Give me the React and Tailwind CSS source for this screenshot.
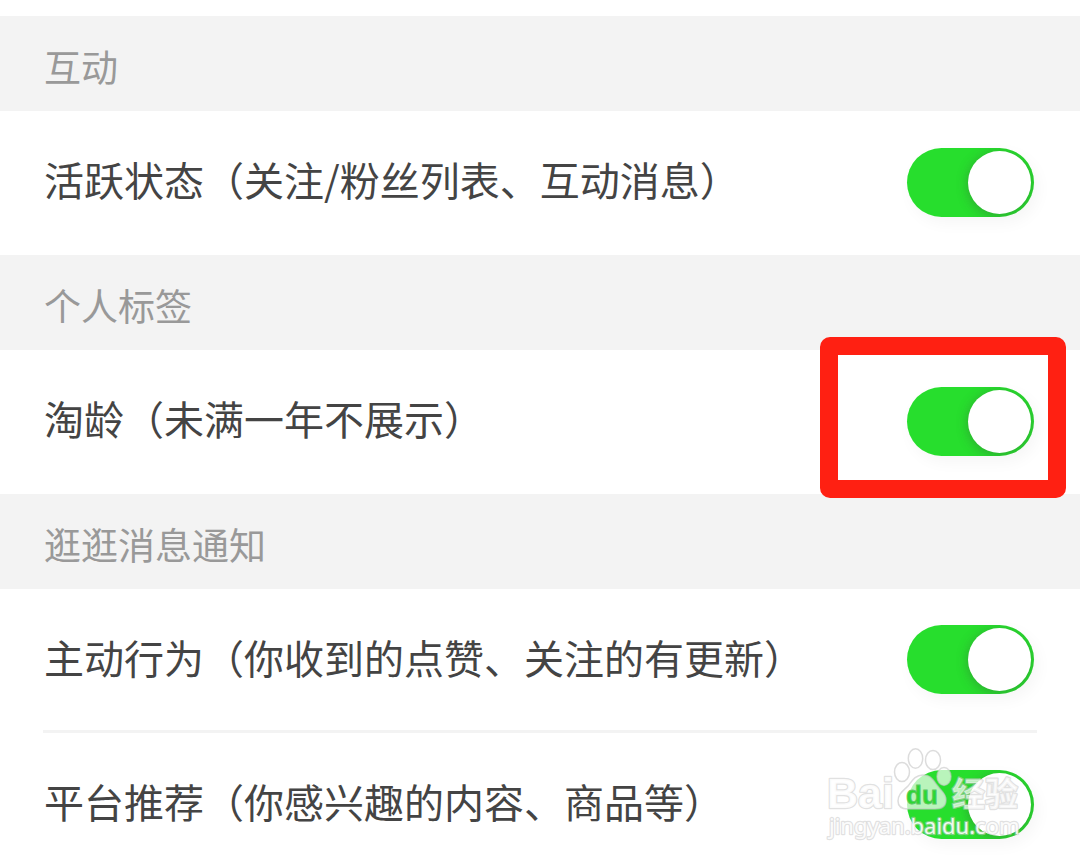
import React from 'react';

const SECTIONS = [
  {
    title: '互动',
    items: [{ id: 'active-status', label: '活跃状态（关注/粉丝列表、互动消息）' }],
  },
  {
    title: '个人标签',
    items: [{ id: 'tao-age', label: '淘龄（未满一年不展示）', highlighted: true }],
  },
  {
    title: '逛逛消息通知',
    items: [
      { id: 'behavior', label: '主动行为（你收到的点赞、关注的有更新）' },
      { id: 'recommend', label: '平台推荐（你感兴趣的内容、商品等）' },
    ],
  },
];

const Toggle = ({ id }) => (
  <input
    id={id}
    type="checkbox"
    role="switch"
    defaultChecked
    className="flex h-[69px] w-[127px] shrink-0 cursor-pointer appearance-none items-center overflow-hidden rounded-full bg-gray-300 p-[3px] shadow-[4px_6px_16px_rgba(0,0,0,0.04)] before:h-[63px] before:w-[63px] before:rounded-full before:bg-white before:shadow-[0_2px_12px_rgba(60,60,60,0.35)] checked:justify-end checked:bg-[#27de2d]"
  />
);

const SettingRow = ({ item, divided }) => (
  <div className="relative px-[43px]">
    <div
      className={
        divided
          ? 'flex h-[144px] items-center justify-between border-b-3 border-[#f3f3f3] pr-[3px] pl-px'
          : 'flex h-[144px] items-center justify-between pr-[3px] pb-[2px] pl-px'
      }
    >
      <label
        htmlFor={item.id}
        className="pb-1.5 text-[40px] leading-[60px] whitespace-nowrap text-[#444444]"
      >
        {item.label}
      </label>
      <Toggle id={item.id} />
    </div>
    {/* Red frame drawn over the row to point at its switch */}
    {item.highlighted && (
      <div className="pointer-events-none absolute -top-[13px] right-[14px] -bottom-1 z-10 w-[246px] rounded-[10px] border-18 border-[#ff2012]" />
    )}
  </div>
);

// Paw logo with the site name, semi-transparent over the last row
const Watermark = () => (
  <svg
    className="pointer-events-none absolute right-[54px] bottom-[18px] h-[102px] w-[202px]"
    viewBox="0 0 202 102"
    fontFamily='"Noto Sans", "Noto Sans CJK SC", sans-serif'
  >
    <g
      fill="#ffffff"
      fillOpacity="0.68"
      stroke="#c4c4c4"
      strokeOpacity="0.6"
      strokeWidth="1.5"
      strokeLinejoin="round"
    >
      <ellipse cx="78" cy="28" rx="7.5" ry="9.5" />
      <ellipse cx="91.5" cy="14.5" rx="7.2" ry="9.8" />
      <ellipse cx="109" cy="16" rx="7.5" ry="9.5" />
      <ellipse cx="120" cy="32.5" rx="7" ry="9" />
      <path d="M99 31 C91 31 88 37 84 42 C79 47 74 50 74 57 C74 63 79 65 84 65 L111 65 C118 65 122 62 122 56 C122 49 117 47 113 41 C109 36 107 31 99 31 Z" />
    </g>
    <g
      fill="#ffffff"
      fillOpacity="0.9"
      stroke="#c8c8c8"
      strokeOpacity="0.55"
      strokeWidth="2.4"
      strokeLinejoin="round"
      paintOrder="stroke"
    >
      <text x="3" y="64" fontSize="43" fontWeight="700" fontFamily='"Liberation Sans", sans-serif'>
        Bai
      </text>
      <text x="128" y="62" fontSize="33" fontWeight="700" fillOpacity="0.7">
        经验
      </text>
      <text x="5" y="90" fontSize="22">
        jingyan.baidu.com
      </text>
    </g>
    <text
      x="82"
      y="60"
      fontSize="26"
      fontWeight="700"
      fontFamily='"Liberation Sans", sans-serif'
      fill="#2bd832"
      stroke="#5fc763"
      strokeWidth="0.8"
    >
      du
    </text>
  </svg>
);

const App = () => {
  return (
    <main className="relative h-screen overflow-hidden bg-white pt-4 font-['Noto_Sans_CJK_SC',sans-serif]">
      {SECTIONS.map((section) => (
        <section key={section.title}>
          <h2 className="flex h-[95px] items-center bg-[#f3f3f3] px-[44px] pt-1 text-[37px] leading-[56px] font-normal text-[#999999]">
            {section.title}
          </h2>
          {section.items.map((item, index) => (
            <SettingRow key={item.id} item={item} divided={index < section.items.length - 1} />
          ))}
        </section>
      ))}
      <Watermark />
    </main>
  );
};

export default App;
